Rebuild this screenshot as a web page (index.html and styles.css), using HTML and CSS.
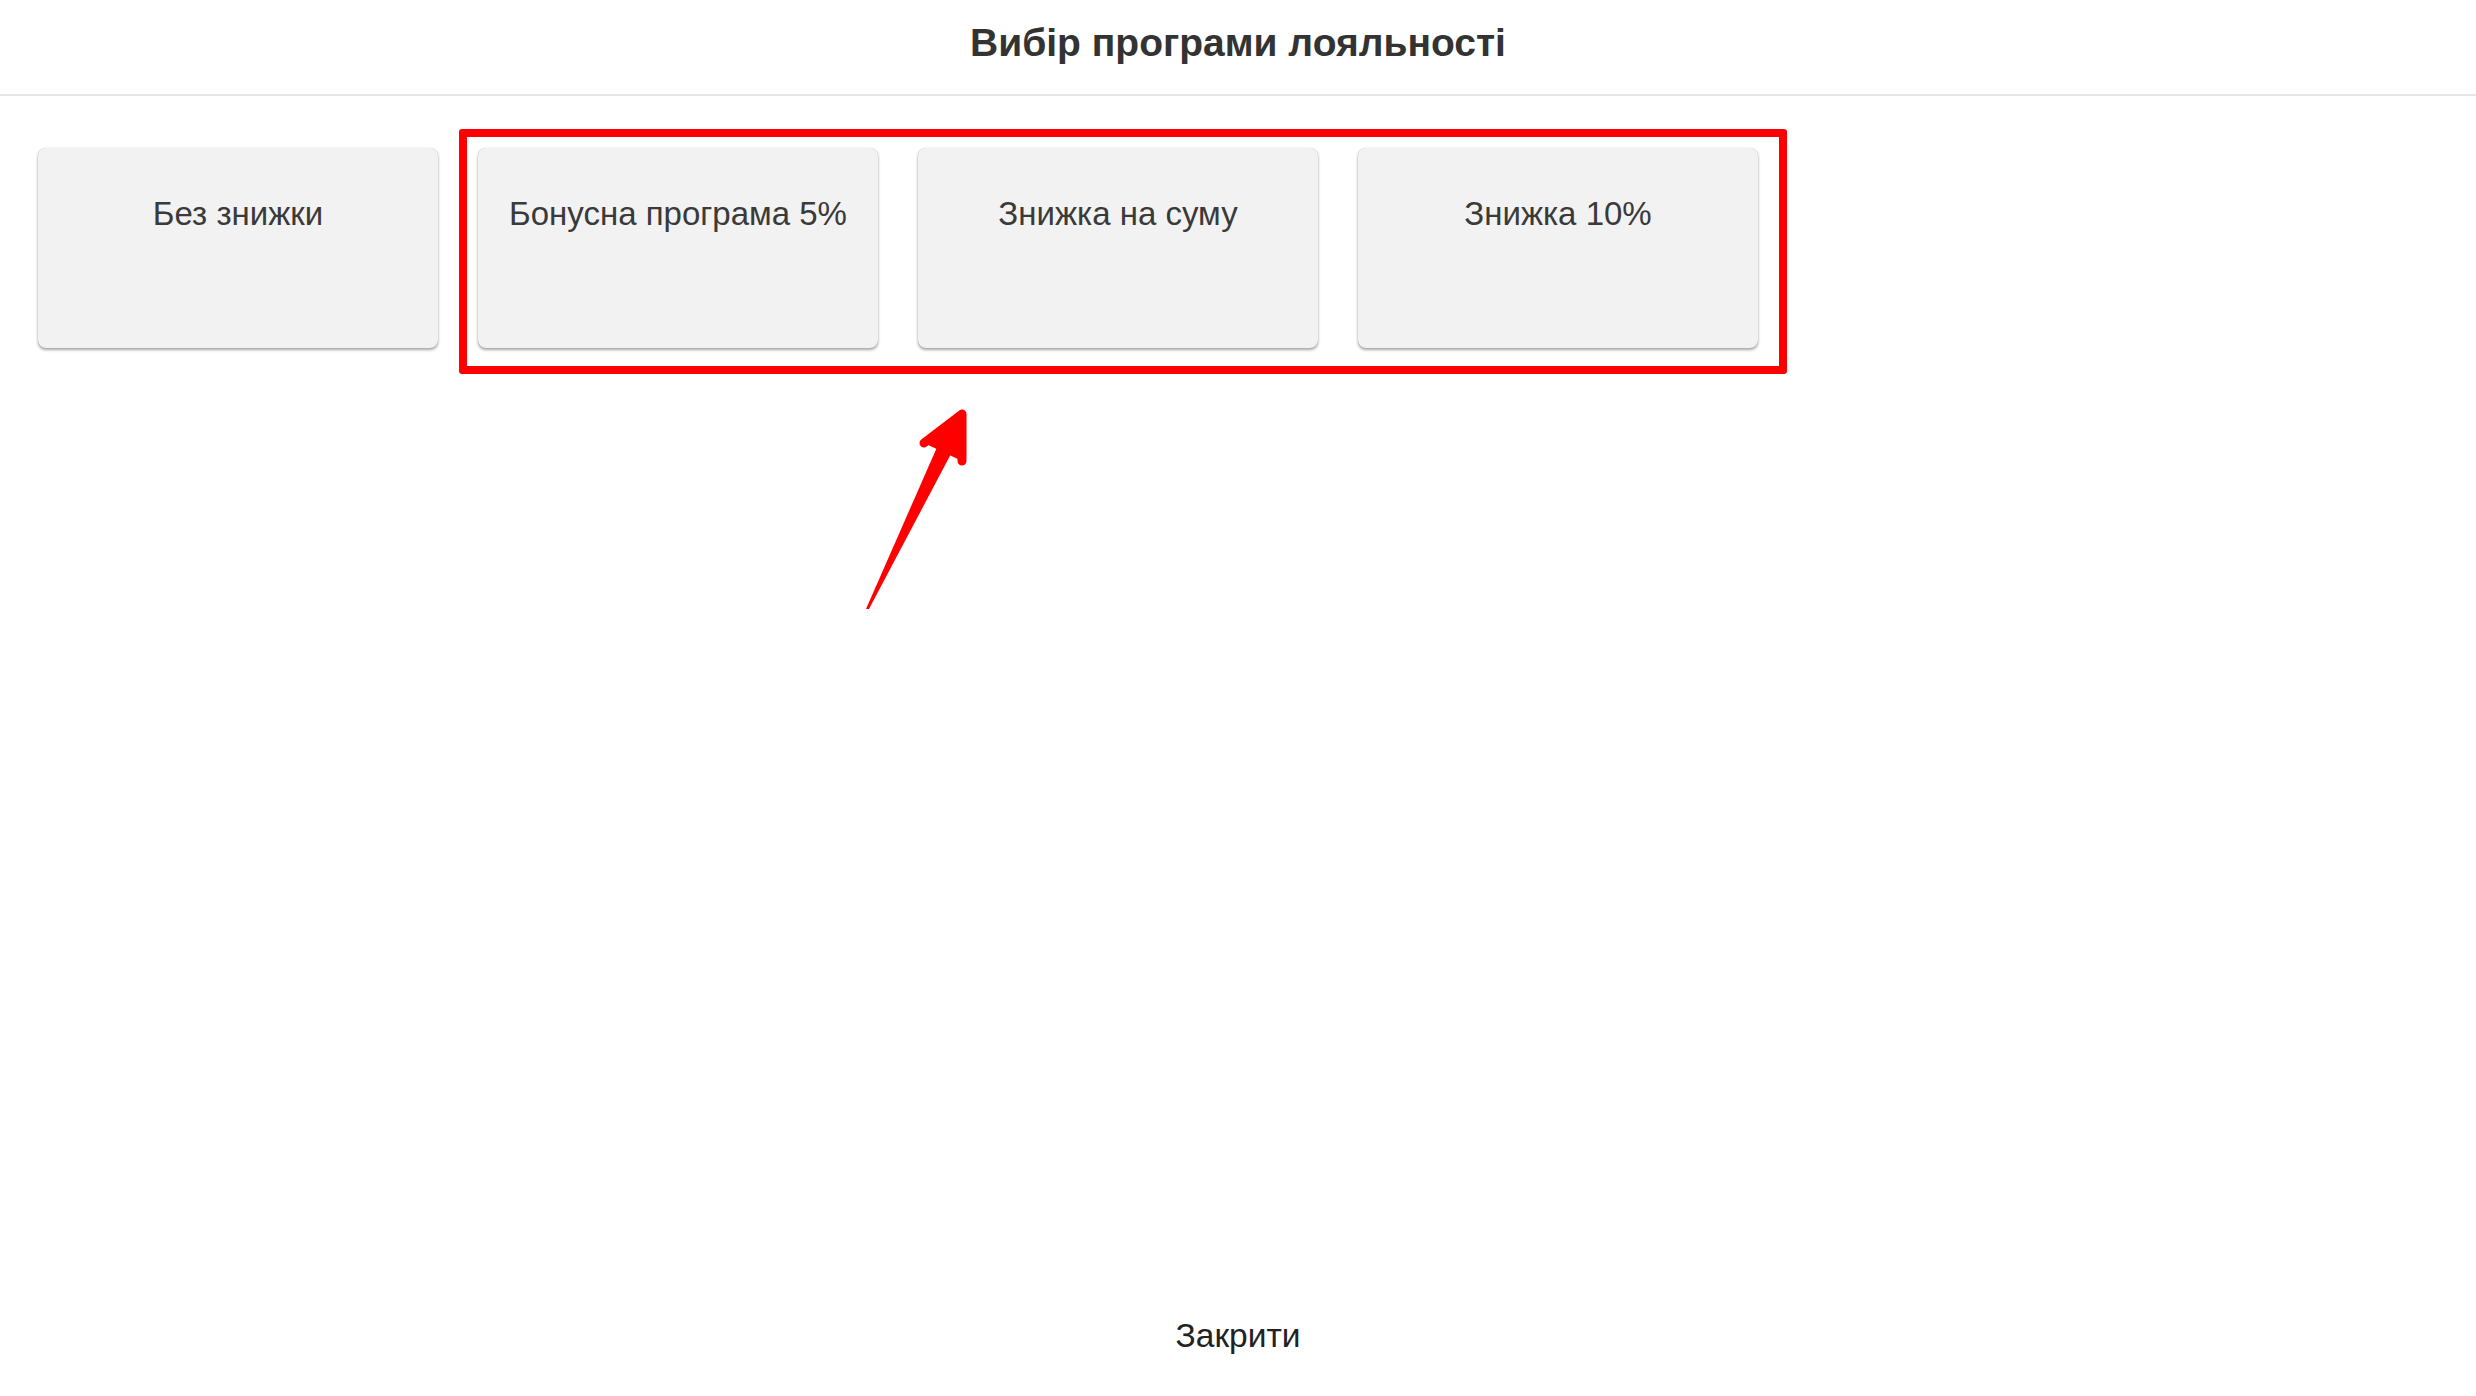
FILE: index.html
```html
<!DOCTYPE html>
<html lang="uk">
<head>
<meta charset="utf-8">
<title>Вибір програми лояльності</title>
<link rel="stylesheet" href="styles.css">
</head>
<body>
<div class="page">
  <header class="header">
    <h1 class="title">Вибір програми лояльності</h1>
  </header>
  <main class="content">
    <div class="cards">
      <button class="card">Без знижки</button>
      <button class="card">Бонусна програма 5%</button>
      <button class="card">Знижка на суму</button>
      <button class="card">Знижка 10%</button>
    </div>
  </main>
  <footer class="footer">
    <button class="close">Закрити</button>
  </footer>
</div>
<div class="highlight"></div>
<svg class="arrow" width="2476" height="1396" viewBox="0 0 2476 1396" aria-hidden="true">
  <polygon points="866,609 869,609 952,452 938,445" fill="#ff0000"/>
  <path d="M924 443 L962 414 L962 461" fill="#ff0000" stroke="#ff0000" stroke-width="9" stroke-linejoin="round" stroke-linecap="round"/>
</svg>
</body>
</html>
```

FILE: styles.css
```css
html, body {
  margin: 0;
  padding: 0;
  background: #ffffff;
}
body {
  font-family: "Liberation Sans", Arial, Helvetica, sans-serif;
  color: #333333;
}
.page {
  display: flex;
  flex-direction: column;
  height: 100vh;
}
.header {
  height: 94px;
  border-bottom: 2px solid #e6e6e6;
  display: flex;
  justify-content: center;
  box-sizing: content-box;
}
.title {
  margin: 0;
  padding-top: 21px;
  font-size: 39px;
  line-height: 44px;
  font-weight: bold;
  color: #333333;
}
.content {
  flex: 1;
  padding: 52px 38px 0;
}
.cards {
  display: flex;
  gap: 40px;
}
.card {
  width: 400px;
  height: 200px;
  box-sizing: border-box;
  padding: 48px 0 0;
  display: flex;
  justify-content: center;
  align-items: flex-start;
  background: #f2f2f2;
  border: none;
  border-radius: 8px;
  box-shadow: 0 2px 3px rgba(0, 0, 0, 0.35), 0 0 1px rgba(0, 0, 0, 0.25);
  font-family: "Liberation Sans", Arial, Helvetica, sans-serif;
  font-size: 33px;
  line-height: 36px;
  color: #3a3a3a;
}
.footer {
  display: flex;
  justify-content: center;
  padding-bottom: 42px;
}
.close {
  background: none;
  border: none;
  padding: 0;
  font-family: "Liberation Sans", Arial, Helvetica, sans-serif;
  font-size: 33.5px;
  line-height: 36px;
  color: #222222;
}
.highlight {
  position: absolute;
  left: 459px;
  top: 129px;
  width: 1328px;
  height: 245px;
  box-sizing: border-box;
  border: 8px solid #ff0000;
  border-radius: 3px;
  pointer-events: none;
}
.arrow {
  position: absolute;
  left: 0;
  top: 0;
  pointer-events: none;
}
```
